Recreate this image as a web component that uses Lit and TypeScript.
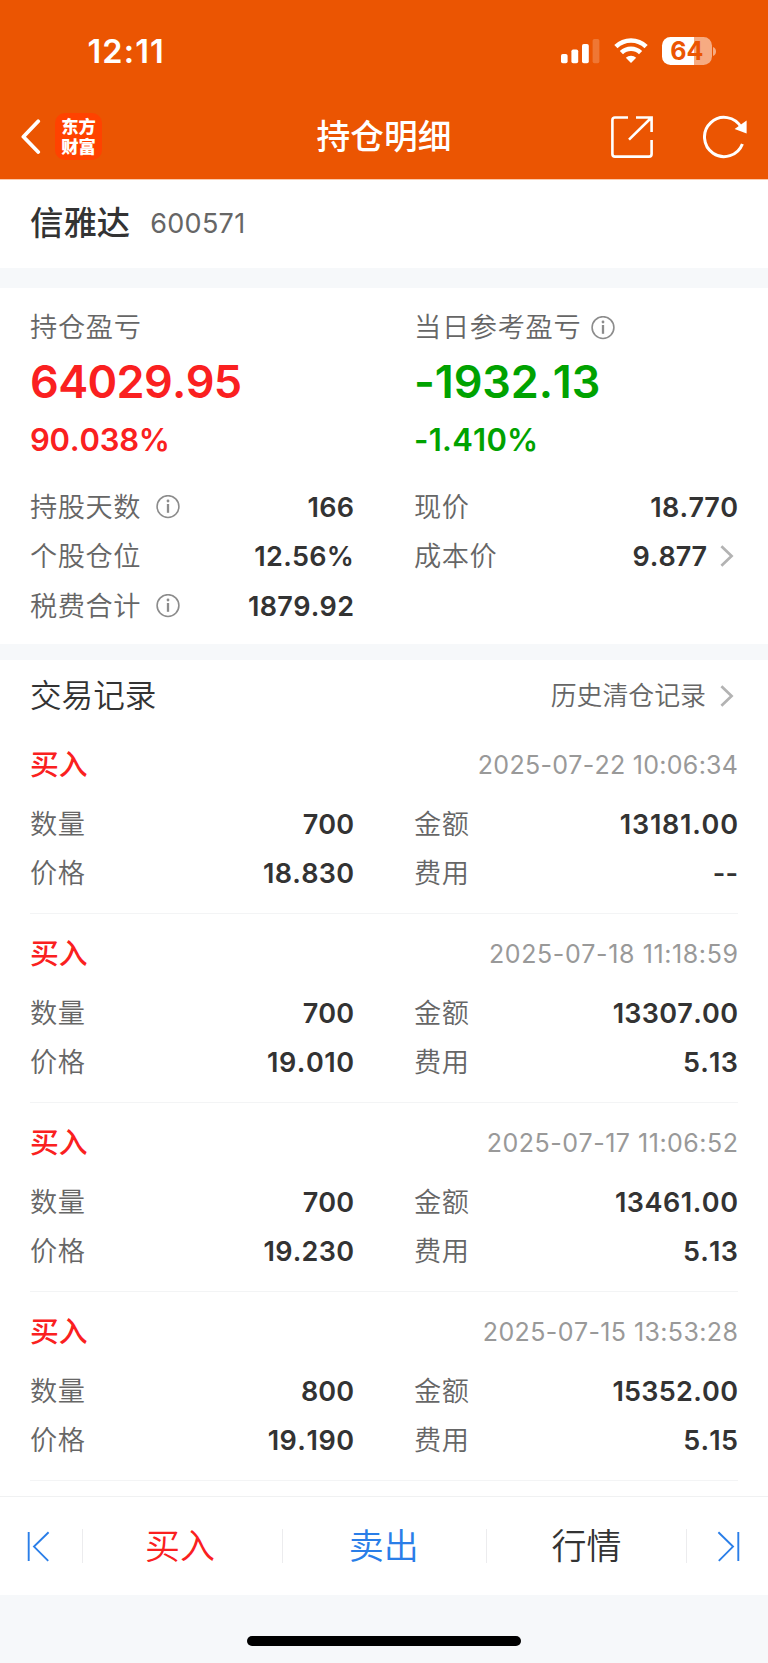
import { LitElement, html, css, svg } from "lit";
import { customElement, property } from "lit/decorators.js";
import { styleMap } from "lit/directives/style-map.js";

const shared = css`
  * { box-sizing: border-box; }
  :host { font-kerning: none; }
  svg { display: block; flex: none; }
`;

interface Trade { time: string; qty: string; amount: string; price: string; fee: string; }

const trades: Trade[] = [
  { time: "2025-07-22 10:06:34", qty: "700", amount: "13181.00", price: "18.830", fee: "--" },
  { time: "2025-07-18 11:18:59", qty: "700", amount: "13307.00", price: "19.010", fee: "5.13" },
  { time: "2025-07-17 11:06:52", qty: "700", amount: "13461.00", price: "19.230", fee: "5.13" },
  { time: "2025-07-15 13:53:28", qty: "800", amount: "15352.00", price: "19.190", fee: "5.15" },
];

// Inter's "1" is narrow, so figures that hold several of them are tracked a little wider.
const tracking = (text: string, base: number, perOne: number) => {
  const px = base + perOne * (text.split("1").length - 1);
  return styleMap({ letterSpacing: `${px}px`, marginRight: `${-px}px` });
};

const chevron = html`<svg width="14" height="22" viewBox="0 0 14 22" fill="none" stroke="#b3b3b3" stroke-width="2.7"><path d="M1.4 1.2L11.6 11L1.4 20.8"/></svg>`;

const infoIcon = html`<svg width="24" height="24" viewBox="0 0 24 24" fill="none" stroke="#8c8c8c">
  <circle cx="12" cy="11.6" r="10.9" stroke-width="1.6"/>
  <path d="M12 9V17.8" stroke-width="2.3"/>
  <circle cx="12" cy="6" r="1.4" fill="#8c8c8c" stroke="none"/>
</svg>`;

@customElement("status-bar")
class StatusBar extends LitElement {
  static styles = [shared, css`
    :host { display: flex; height: 103px; padding: 34px 51.5px 0 87.5px; justify-content: space-between; align-items: flex-start; color: #fff; }
    .time { height: 36px; line-height: 36px; font-size: 32.5px; font-weight: 600; letter-spacing: 1.1px; }
    .icons { display: flex; align-items: flex-start; padding-top: 3px; }
    .signal { margin: 2px 14px 0 0; }
    .wifi { margin: 1px 14px 0 0; }
    .battery { display: flex; align-items: center; }
    .cell { width: 49.5px; height: 28px; border-radius: 8.5px; text-align: center; line-height: 28px; font-size: 25px; font-weight: 700; color: #eb5502; background: linear-gradient(90deg, #fff 32px, #f6ab82 32px); }
    .nub { margin-left: 1px; }
  `];
  render() {
    return html`
      <span class="time">12:11</span>
      <div class="icons">
        <svg class="signal" width="39" height="25" viewBox="0 0 39 25" fill="#fff">
          <rect x="0" y="15" width="6.6" height="9.3" rx="1.8"/>
          <rect x="10.4" y="10.4" width="6.8" height="13.9" rx="1.8"/>
          <rect x="21" y="5" width="6.8" height="19.3" rx="1.8"/>
          <rect x="31.6" y="0" width="6.8" height="24.3" rx="1.8" opacity=".2"/>
        </svg>
        <svg class="wifi" width="34" height="26" viewBox="0 0 34 26" fill="none" stroke="#fff" stroke-width="4.6">
          <path d="M1.9 8.7A21.6 21.6 0 0 1 32.1 8.7"/>
          <path d="M7.4 14.7A13.8 13.8 0 0 1 26.6 14.7"/>
          <path d="M17 25L11.8 19.8A7.6 7.6 0 0 1 22.2 19.8Z" fill="#fff" stroke="none"/>
        </svg>
        <div class="battery">
          <span class="cell">64</span>
          <svg class="nub" width="4" height="9" viewBox="0 0 4 9"><path d="M0 0C4 1.4 4 7.6 0 9Z" fill="#f6ab82"/></svg>
        </div>
      </div>`;
  }
}

@customElement("nav-header")
class NavHeader extends LitElement {
  static styles = [shared, css`
    :host { display: grid; grid-template-columns: 1fr auto 1fr; height: 76px; padding: 0 21.5px 9px; align-items: center; color: #fff; }
    .left { display: flex; align-items: center; gap: 14px; margin-left: -1.5px; }
    .logo { width: 47px; height: 47px; border-radius: 10px; background: #ff4200; padding: 4px 0 0; display: flex; flex-direction: column; align-items: center; font-size: 17.3px; line-height: 20px; font-weight: 900; }
    .logo span { height: 20px; }
    .title { font-size: 33.7px; line-height: 40px; font-weight: 500; height: 40px; }
    .right { display: flex; justify-content: flex-end; align-items: center; gap: 50px; }
  `];
  render() {
    return html`
      <div class="left">
        <svg width="21" height="35" viewBox="0 0 21 35" fill="none" stroke="#fff" stroke-width="3.8" stroke-linecap="round" stroke-linejoin="round"><path d="M18.2 2.3L3.4 17.7L18.2 33"/></svg>
        <div class="logo"><span>东方</span><span>财富</span></div>
      </div>
      <div class="title">持仓明细</div>
      <div class="right">
        <svg width="42" height="42" viewBox="0 0 42 42" fill="none" stroke="#fff" stroke-width="2.6">
          <path d="M17 1.5H4A2.6 2.6 0 0 0 1.4 4V38A2.6 2.6 0 0 0 4 40.6H38A2.6 2.6 0 0 0 40.6 38V24"/>
          <path d="M25 1.5H40.6V16M40 2L18 23.6"/>
        </svg>
        <svg width="44" height="44" viewBox="0 .6 44 44" fill="none" stroke="#fff" stroke-width="3">
          <path d="M39.4 29.6A19.6 19.6 0 1 1 38.2 13"/>
          <path d="M43.6 6V19L31.6 14.6Z" fill="#fff" stroke="none"/>
        </svg>
      </div>`;
  }
}

@customElement("data-row")
class DataRow extends LitElement {
  @property() label = "";
  @property() value = "";
  @property({ type: Boolean }) info = false;
  @property({ type: Boolean }) link = false;
  static styles = [shared, css`
    :host { display: flex; height: 49.25px; align-items: center; }
    .label { height: 40px; line-height: 41px; font-size: 27.2px; letter-spacing: .6px; color: #666; font-weight: 350; margin-right: 14.5px; }
    .value { height: 40px; line-height: 41px; font-size: 27px; font-weight: 600; color: #333; }
    .fill { flex: 1; }
    .go { margin: 0 4px 0 13px; }
  `];
  render() {
    return html`<span class="label">${this.label}</span>${this.info ? infoIcon : null}<span class="fill"></span>
      <span class="value" style=${tracking(this.value, 0.05, 0.23)}>${this.value}</span>${this.link ? html`<span class="go">${chevron}</span>` : null}`;
  }
}

@customElement("trade-record")
class TradeRecord extends LitElement {
  @property({ attribute: false }) trade!: Trade;
  static styles = [shared, css`
    :host { display: block; height: 189px; border-bottom: 1.5px solid #f3f4f5; padding-top: 19.5px; }
    .top { display: flex; justify-content: space-between; align-items: center; height: 40px; margin-bottom: 15px; }
    .side { height: 40px; line-height: 40px; font-size: 28.8px; font-weight: 500; color: #fa2020; }
    .time { height: 40px; line-height: 40px; font-size: 25px; color: #999; }
    .grid { display: grid; grid-template-columns: 1fr 1fr; column-gap: 60px; }
  `];
  render() {
    const t = this.trade;
    return html`
      <div class="top"><span class="side">买入</span><span class="time" style=${tracking(t.time, 0.17, 0.11)}>${t.time}</span></div>
      <div class="grid">
        <data-row label="数量" value=${t.qty}></data-row><data-row label="金额" value=${t.amount}></data-row>
        <data-row label="价格" value=${t.price}></data-row><data-row label="费用" value=${t.fee}></data-row>
      </div>`;
  }
}

@customElement("bottom-bar")
class BottomBar extends LitElement {
  static styles = [shared, css`
    :host { display: grid; grid-template-columns: 82px 200px 204px 200px 82px; height: 99px; border-top: 1.5px solid #f0f1f2; background: #fff; align-items: center; }
    .cell { display: flex; justify-content: center; align-items: center; height: 34px; line-height: 34px; font-size: 35px; border-left: 1.5px solid #ececee; font-weight: 350; }
    .first { border-left: 0; justify-content: flex-start; padding-left: 27px; }
    .last { justify-content: flex-start; padding-left: 30px; }
    .buy { color: #fa2020; padding-right: 5px; }
    .sell { color: #2a7ee8; padding-right: 1.5px; }
    .quote { color: #333; }
  `];
  render() {
    const edge = (d: string) => html`<svg width="23" height="31" viewBox="0 0 23 31" fill="none" stroke="#2a7ee8" stroke-width="1.9">${svg`<path d=${d}/>`}</svg>`;
    return html`
      <div class="cell first">${edge("M1.7 1V30M21.6 1.2L7 15.6L21.2 29.8")}</div>
      <div class="cell buy">买入</div>
      <div class="cell sell">卖出</div>
      <div class="cell quote">行情</div>
      <div class="cell last">${edge("M21.3 1V30M1.4 1.2L16 15.6L1.8 29.8")}</div>`;
  }
}

@customElement("app-root")
class AppRoot extends LitElement {
  static styles = [shared, css`
    :host { display: flex; flex-direction: column; width: 768px; height: 1663px; overflow: hidden; background: #f6f8fa; font-family: Inter, "Noto Sans CJK SC", sans-serif; white-space: nowrap; }
    .head { background: #eb5502; height: 179px; flex: none; }
    .stock { height: 89px; flex: none; background: #fff; border-top: 1px solid #fbc9ab; padding: 23px 30px 0; display: flex; gap: 20px; margin-bottom: 20px; }
    .name { height: 40px; line-height: 40px; font-size: 33.4px; font-weight: 500; color: #333; }
    .code { height: 40px; line-height: 40px; font-size: 27px; letter-spacing: .3px; padding-top: .6px; color: #666; }
    .summary { height: 356px; flex: none; background: #fff; padding: 20px 30px 0; display: grid; grid-template-columns: 1fr 1fr; column-gap: 60px; align-content: start; margin-bottom: 16px; }
    .stat { height: 174.5px; }
    .caption { display: flex; align-items: center; gap: 9.5px; height: 40px; line-height: 40px; font-size: 27.2px; letter-spacing: .7px; color: #666; font-weight: 350; }
    .total { height: 50px; line-height: 50px; margin-top: 9px; font-size: 45px; font-weight: 600; }
    .total.up { letter-spacing: -.65px; }
    .total.down { letter-spacing: -.15px; }
    .rate { height: 40px; line-height: 40px; margin-top: 13px; font-size: 31px; font-weight: 600; }
    .rate.up { letter-spacing: -.22px; }
    .rate.down { letter-spacing: .25px; }
    .up { color: #fa2020; }
    .down { color: #00a200; }
    .records { flex: 1; background: #fff; padding: 0 30px; overflow: hidden; }
    .heading { display: flex; align-items: center; justify-content: space-between; height: 65px; padding-top: 7px; }
    .heading-title { font-size: 31.6px; line-height: 40px; height: 40px; color: #333; font-weight: 350; }
    .history { display: flex; align-items: center; gap: 14px; padding-right: 4px; font-size: 25.9px; line-height: 40px; height: 40px; color: #666; font-weight: 350; }
    .home { height: 68px; flex: none; display: flex; justify-content: center; padding-top: 41px; }
    .pill { width: 274px; height: 10px; border-radius: 5px; background: #000; }
  `];
  render() {
    return html`
      <div class="head"><status-bar></status-bar><nav-header></nav-header></div>
      <div class="stock"><span class="name">信雅达</span><span class="code">600571</span></div>
      <div class="summary">
        <div class="stat">
          <div class="caption">持仓盈亏</div>
          <div class="total up">64029.95</div>
          <div class="rate up">90.038%</div>
        </div>
        <div class="stat">
          <div class="caption"><span>当日参考盈亏</span>${infoIcon}</div>
          <div class="total down">-1932.13</div>
          <div class="rate down">-1.410%</div>
        </div>
        <div>
          <data-row label="持股天数" value="166" info></data-row>
          <data-row label="个股仓位" value="12.56%"></data-row>
          <data-row label="税费合计" value="1879.92" info></data-row>
        </div>
        <div>
          <data-row label="现价" value="18.770"></data-row>
          <data-row label="成本价" value="9.877" link></data-row>
        </div>
      </div>
      <div class="records">
        <div class="heading">
          <span class="heading-title">交易记录</span>
          <span class="history">历史清仓记录 ${chevron}</span>
        </div>
        <div>${trades.map((t) => html`<trade-record .trade=${t}></trade-record>`)}</div>
      </div>
      <bottom-bar></bottom-bar>
      <div class="home"><div class="pill"></div></div>`;
  }
}
